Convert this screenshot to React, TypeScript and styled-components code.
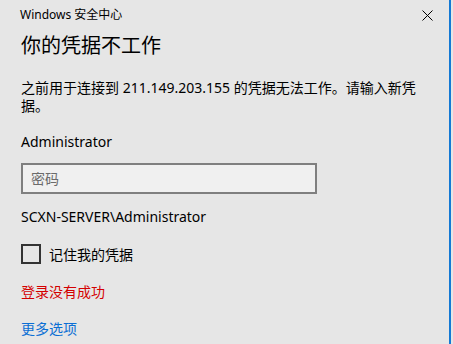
import React from 'react';
import styled, { createGlobalStyle } from 'styled-components';

const GlobalStyle = createGlobalStyle`
  html, body {
    margin: 0;
    padding: 0;
    background: #e6e6e6;
  }
  body {
    font-family: "Noto Sans", "Noto Sans CJK SC", sans-serif;
  }
`;

const Dialog = styled.div`
  position: relative;
  width: 451px;
  height: 344px;
  box-sizing: border-box;
  background: #e6e6e6;
  border-right: 2px solid #1479d4;
  padding: 0 0 0 21px;
  color: #000;
`;

const TitleBar = styled.div`
  display: flex;
  align-items: center;
  justify-content: space-between;
  height: 28px;
  padding-right: 16px;
`;

const AppName = styled.span`
  font-size: 12px;
  line-height: 28px;
  margin-left: -1px;
  padding-top: 1px;
`;

const CloseButton = styled.button`
  display: flex;
  align-items: center;
  justify-content: center;
  width: 12px;
  height: 12px;
  padding: 0;
  margin-top: 2px;
  border: none;
  background: none;
  cursor: pointer;
`;

const Heading = styled.h1`
  margin: 4px 0 0;
  font-size: 20px;
  font-weight: 400;
  line-height: 28px;
`;

const Message = styled.p`
  margin: 19px 0 0;
  width: 400px;
  font-size: 14px;
  line-height: 18px;
`;

const Line = styled.div<{ $top: number; $color?: string }>`
  margin-top: ${(p) => p.$top}px;
  font-size: 14px;
  line-height: 20px;
  color: ${(p) => p.$color || '#000'};
`;

const Link = styled.a`
  color: #0b6fd4;
  text-decoration: none;
  cursor: pointer;
`;

const PasswordInput = styled.input`
  display: block;
  box-sizing: border-box;
  margin-top: 11px;
  width: 296px;
  height: 31px;
  padding: 0 8px;
  border: 2px solid #7f7f7f;
  background: #f0f0f0;
  font-family: inherit;
  font-size: 14px;
  outline: none;

  &::placeholder {
    color: #6b6b6b;
  }
`;

const CheckRow = styled.label`
  display: flex;
  align-items: center;
  gap: 8px;
  margin-top: 17px;
  height: 20px;
  font-size: 14px;
  cursor: pointer;
`;

const Box = styled.span`
  box-sizing: border-box;
  width: 20px;
  height: 20px;
  border: 2px solid #333;
`;

export default function App() {
  return (
    <>
      <GlobalStyle />
      <Dialog>
        <TitleBar>
          <AppName>Windows 安全中心</AppName>
          <CloseButton aria-label="关闭">
            <svg width="11" height="11" viewBox="0 0 11 11">
              <path d="M0.5 0.5 L10.5 10.5 M10.5 0.5 L0.5 10.5" stroke="#000" strokeWidth="1" />
            </svg>
          </CloseButton>
        </TitleBar>

        <Heading>你的凭据不工作</Heading>

        <Message>之前用于连接到 211.149.203.155 的凭据无法工作。请输入新凭据。</Message>

        <Line $top={17}>Administrator</Line>

        <PasswordInput type="password" placeholder="密码" />

        <Line $top={13}>SCXN-SERVER\Administrator</Line>

        <CheckRow>
          <Box />
          记住我的凭据
        </CheckRow>

        <Line $top={18} $color="#d40000">登录没有成功</Line>

        <Line $top={17}>
          <Link>更多选项</Link>
        </Line>
      </Dialog>
    </>
  );
}
